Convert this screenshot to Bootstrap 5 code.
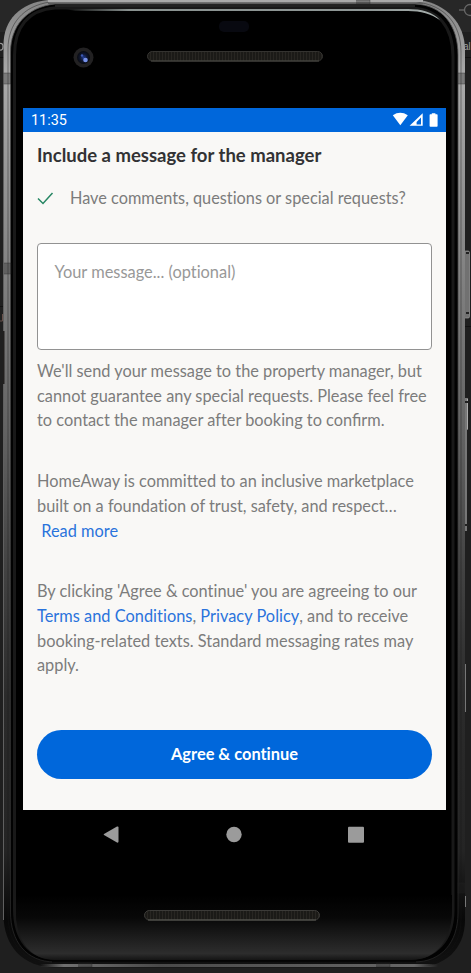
<!DOCTYPE html>
<html lang="en">
<head>
<meta charset="utf-8">
<meta name="viewport" content="width=device-width, initial-scale=1">
<title>Agree &amp; continue</title>
<link rel="stylesheet" href="https://cdn.jsdelivr.net/npm/bootstrap@5.3.0/dist/css/bootstrap.min.css">
<style>
body{width:471px;height:973px;background:#202020;font-family:Lato,"Liberation Sans",sans-serif;overflow:hidden}
.shell{left:0;top:0;z-index:0}
.device{z-index:1;padding:0 25px 0 23px;height:973px}
.top-bezel{height:108px}
.app-screen{height:702.4px;background:#f9f8f6;color:#7c7c7c;font-size:16.3px;line-height:24.7px;white-space:nowrap;font-variant-ligatures:none}
.joined{font-variant-ligatures:common-ligatures}
.statusbar{height:24.3px;background:#0067db;color:#fff;font:14.4px/25px Roboto,sans-serif;padding:0 7px 0 8px}
.content{padding:0 14px}
.heading{font-size:18.5px;line-height:24px;font-weight:700;color:#323234;margin-top:10.7px}
.request{margin-top:18.8px}
.request svg{width:33px}
.message{height:107px;margin:32.5px 0 9px;background:#fff;border:1px solid #929292;border-radius:4px;padding:16px 16.5px;color:#989898;resize:none;font-size:16.4px;line-height:24.7px;box-shadow:none;font-variant-ligatures:none}
.message::placeholder{color:#989898}
.para{margin-bottom:36px;font-size:16.33px}
.para a{color:#2a73dc;text-decoration:none;letter-spacing:.03px}
.agree{height:49px;background:#0067db;color:#fff;font-size:16.4px;font-weight:700;margin-top:51.5px;font-variant-ligatures:none}
.android-nav{height:50px;padding:0 81px 0 79px}
</style>
</head>
<body class="position-relative">
<svg class="shell position-absolute" width="471" height="973" viewBox="0 0 471 973" aria-hidden="true">
  <defs>
    <linearGradient id="metal" x1="0" y1="0" x2="0" y2="1">
      <stop offset="0" stop-color="#858585"/><stop offset=".08" stop-color="#aaa"/><stop offset=".25" stop-color="#888"/><stop offset=".45" stop-color="#626262"/><stop offset=".58" stop-color="#444"/><stop offset=".72" stop-color="#2b2b2b"/><stop offset=".88" stop-color="#242424"/><stop offset=".95" stop-color="#080808"/><stop offset="1" stop-color="#111"/>
    </linearGradient>
    <linearGradient id="rim" x1="0" y1="0" x2="0" y2="1"><stop offset="0" stop-color="#555"/><stop offset=".5" stop-color="#3a3a3a"/><stop offset="1" stop-color="#262626"/></linearGradient>
    <linearGradient id="chin" x1="0" y1="0" x2="0" y2="1"><stop offset="0" stop-color="#000"/><stop offset=".35" stop-color="#080808"/><stop offset=".9" stop-color="#2d2d2d"/><stop offset="1" stop-color="#151515"/></linearGradient>
    <linearGradient id="shine"><stop offset="0" stop-color="#89918f" stop-opacity="0"/><stop offset=".17" stop-color="#89918f"/><stop offset=".82" stop-color="#8f9796"/><stop offset="1" stop-color="#a8b0ae"/></linearGradient>
    <linearGradient id="bottomEdge" gradientUnits="userSpaceOnUse" x1="40" y1="0" x2="438" y2="0"><stop offset="0" stop-color="#777" stop-opacity="0"/><stop offset=".06" stop-color="#707070"/><stop offset=".3" stop-color="#4a4a4a"/><stop offset=".94" stop-color="#666"/><stop offset="1" stop-color="#777" stop-opacity="0"/></linearGradient>
    <radialGradient id="lens"><stop offset="0" stop-color="#203b91"/><stop offset=".55" stop-color="#10172e"/><stop offset="1" stop-color="#080a10"/></radialGradient>
    <pattern id="mesh" width="3" height="3" patternUnits="userSpaceOnUse"><rect width="3" height="3" fill="#1b1a17"/><path d="M.5 0V3" stroke="#282622"/></pattern>
  </defs>
  <rect width="471" height="973" fill="#1f1f1f"/>
  <rect width="471" height="32" fill="#272727"/>
  <path d="M0 57.500h5M464 57.500h7M0 306.500h5M464 326.500h7" stroke="#111"/>
  <circle cx="470" cy="10" r="5.500" fill="none" stroke="#686868" stroke-width="1.300"/><path d="M459 10h5" stroke="#686868" stroke-width="1.300"/>
  <path d="M0 43.500Q3 43 3 46.500Q3 50.500 0 50" fill="none" stroke="#999" stroke-width="1.200"/>
  <path d="M0 321h2.500v-7" fill="none" stroke="#66504a"/>
  <rect x="464" y="251" width="5.500" height="67" rx="1.500" fill="#717171" stroke="#999" stroke-width=".7"/>
  <path d="M466 253h3M466 313h3" stroke="#222" stroke-width="2"/>
  <path d="M464.500 398h3.500v32h-1v101h-2.500z" fill="#777"/><path d="M467.500 399v30" stroke="#aaa"/><path d="M465 402h3M465 525h3" stroke="#222" stroke-width="2"/>
  <path d="M465.500 664v48M465.500 896v11" stroke="#777"/>
  <path d="M48 0H420C446 4 465 23 465 50V920C465 949 445 967.500 415 967.500H55C23 967.500 3.500 946 3.500 915V45C3.500 20 20 3 48 0z" fill="url(#metal)"/>
  <path d="M3.500 130V920" stroke="#606060"/>
  <path d="M3 331h1.500v53H3z" fill="#211f1e"/>
  <path d="M50 2H416C445 5 461 24 461 52V919C461 947 444 963 416 963H52C23 963 8 943 8 914V49C8 24 23 6 50 2z" fill="none" stroke="#151515" stroke-opacity=".4"/>
  <path d="M55 4H415C442 5 458 25 458 55V913C458 943 441 962 414 962H55C26 962 10.500 941 10.500 912V52C10.500 27 26 7 55 4z" fill="#020202" stroke="url(#rim)" stroke-width=".8"/>
  <path d="M55 8H411C439 9 453 27 453 57V910C453 940 436 958 411 958H55C29 958 14.500 939 14.500 909V55C14.500 27 28 10 55 8z" fill="#000" stroke="#191919" stroke-width="3"/>
  <path d="M16 895H452V913C451 940 436 960 411 960H55C30 960 16 940 16 913z" fill="url(#chin)"/>
  <path d="M52 961.500H416" stroke="#060606" stroke-width="2"/><path d="M40 965.500H438" stroke="url(#bottomEdge)" stroke-width="3"/>
  <path d="M48 1H423" stroke="#aaa" stroke-width="2"/><path d="M48 3.500H423" stroke="#5d5d5d"/><path d="M55 6H415" stroke="#222" stroke-width="2"/>
  <path d="M65 9H408C421 9 433 12 440 20C431 14 421 11 408 11H75z" fill="url(#shine)"/>
  <path d="M3.500 73h7v11h-7M457.500 73h7.500v11h-7.500M356 0h14v5h-14M4 263h7v11H4M457.500 883h7v10h-7M78 963h14v4H78M376 963h14v4h-14" fill="#222" fill-opacity=".35" stroke="#222" stroke-opacity=".5" stroke-width=".7"/>
  <rect x="219" y="21" width="30" height="11" rx="5" fill="#080910"/>
  <circle cx="83.500" cy="57.500" r="10" fill="#222122"/><circle cx="83.500" cy="57.500" r="6.500" fill="url(#lens)"/><circle cx="85.500" cy="60" r="2.300" fill="#7792eb"/><circle cx="82" cy="55.500" r="1.200" fill="#3c59b4"/>
  <rect x="147.500" y="51.500" width="175" height="9.500" rx="4.750" fill="url(#mesh)" stroke="#343330"/><path d="M151 61H319" stroke="#4b4a45"/>
  <rect x="144.500" y="910.500" width="175" height="9.500" rx="4.750" fill="url(#mesh)" stroke="#3c3b38"/><path d="M148 920H316" stroke="#5b5a54"/>
  <text x="463.500" y="50" font-family="Liberation Sans" font-size="11" textLength="7" lengthAdjust="spacingAndGlyphs" fill="#a2a2a2">al</text>
</svg>
<main class="device position-relative d-flex flex-column">
  <div class="top-bezel"></div>
  <section class="app-screen">
    <header class="statusbar d-flex justify-content-between align-items-center">
      <span>11:35</span>
      <svg width="47" height="24" viewBox="392 108 47 24" fill="#fff"><path d="M392.800 115.200Q400.200 110.300 407.800 115.200L400.300 125.200z"/><path fill-rule="evenodd" d="M422.700 113.200V125.800H409.600zM421 117.600L416.600 122V124.600H421z"/><path d="M431.800 114.300V113.200h3.600v1.100h1.500q.7 0 .7.700v11q0 .8-.8.800h-6.400q-.8 0-.8-.8V115q0-.7.7-.7z"/></svg>
    </header>
    <div class="content">
      <h1 class="heading mb-0">Include a message for the manager</h1>
      <div class="request d-flex align-items-center"><svg height="16" viewBox="0 0 33 16" fill="none" stroke="#268663" stroke-width="1.500"><path d="M1 8.500L6 13.500L15.500 3"/></svg><span>Have comments, questions or special requests?</span></div>
      <textarea class="message form-control" placeholder="Your message... (optional)"></textarea>
      <p class="para">We'll send your message to the property manager, but<br>cannot guarantee any special requests. Please feel free<br>to contact the manager after booking to <span class="joined">confirm</span>.</p>
      <p class="para">HomeAway is committed to an inclusive marketplace<br>built on a foundation of trust, safety, and respect…<br>&nbsp;<a href="#">Read more</a></p>
      <p class="mb-0 para">By clicking 'Agree &amp; continue' you are agreeing to our<br><a href="#">Terms and Conditions</a>, <a href="#">Privacy Policy</a>, and to receive<br>booking-related texts. Standard messaging rates may<br>apply.</p>
      <button class="agree btn rounded-pill w-100 border-0 py-0" type="button">Agree &amp; continue</button>
    </div>
  </section>
  <nav class="android-nav d-flex justify-content-between align-items-center">
    <svg width="18" height="18" fill="#9b9b9b"><path d="M2 8L15 .500Q16.500 0 16.500 1.500V15.500Q16.500 17 15 16.500L2 9Q1.300 8.500 2 8z"/></svg>
    <svg width="18" height="18" fill="#9b9b9b"><circle cx="9" cy="8.500" r="7.700"/></svg>
    <svg width="18" height="18" fill="#9b9b9b"><rect x="1" y=".7" width="16" height="16" rx="1"/></svg>
  </nav>
</main>
<script src="https://cdn.jsdelivr.net/npm/bootstrap@5.3.0/dist/js/bootstrap.bundle.min.js"></script>
</body>
</html>
